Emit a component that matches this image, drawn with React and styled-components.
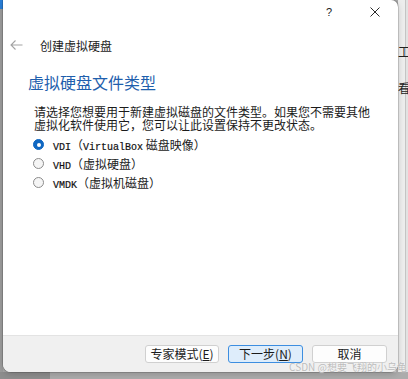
import React from "react";
import styled, { createGlobalStyle } from "styled-components";

const GlobalStyle = createGlobalStyle`
  html, body { margin: 0; padding: 0; }
  body {
    width: 408px; height: 379px; overflow: hidden;
    font-family: "Noto Sans CJK SC", "Noto Sans", sans-serif;
    color: #1b1b1b;
  }
`;

const Desktop = styled.div`
  position: relative;
  width: 408px;
  height: 379px;
  overflow: hidden;
  display: grid;
  grid-template-columns: 3px 395px 10px;
  grid-template-rows: 372px 7px;
  background: #a9a9a9;
`;

const LeftStrip = styled.div`
  background: linear-gradient(#2a7fd8 0 9px, #9d9d9d 9px);
`;

const RightStrip = styled.div`
  background: linear-gradient(to right, #ededed 0 7px, #c4c4c4 7px 8px, #e2e2e2 8px);
  overflow: hidden;
  white-space: nowrap;
  font-size: 12px;
  line-height: 14px;
  color: #222;
  padding-top: 45px;
  display: flex;
  flex-direction: column;
  gap: 22px;
`;

const BottomStrip = styled.div`
  grid-column: 1 / -1;
  background: linear-gradient(to right, #8e8e8e 0 50px, #acacac 50px);
`;

const Dialog = styled.div`
  position: relative;
  z-index: 1;
  background: #ffffff;
  border-radius: 0 7px 8px 8px;
  box-shadow: 0 0 0 1px rgba(0, 0, 0, 0.14), 0 2px 6px rgba(0, 0, 0, 0.18);
  display: flex;
  flex-direction: column;
  overflow: hidden;
`;

const TitleBar = styled.div`
  height: 24px;
  display: flex;
  justify-content: flex-end;
`;

const CaptionButton = styled.div`
  width: 46px;
  display: flex;
  align-items: center;
  justify-content: center;
  font-family: "Liberation Sans", sans-serif;
  font-size: 11px;
  color: #222;
`;

const Header = styled.div`
  height: 42px;
  display: flex;
  align-items: center;
  padding-left: 7px;
  gap: 17px;
  font-size: 12px;
  color: #222;
`;

const Content = styled.div`
  padding-left: 25px;
  display: flex;
  flex-direction: column;
`;

const Heading = styled.div`
  margin-top: 6px;
  font-size: 16px;
  line-height: 20px;
  color: #1f5fad;
`;

const Description = styled.p`
  margin: 13px 0 0 6px;
  font-size: 12px;
  line-height: 13px;
  color: #1b1b1b;
`;

const RadioList = styled.div`
  margin-top: 4px;
  display: flex;
  flex-direction: column;
`;

const RadioRow = styled.div`
  height: 19px;
  display: flex;
  align-items: center;
  gap: 9px;
  padding-left: 5px;
  font-size: 12px;
  color: #1b1b1b;
`;

const RadioDot = styled.span`
  width: 11px;
  height: 11px;
  box-sizing: border-box;
  border-radius: 50%;
  flex: none;
  display: flex;
  align-items: center;
  justify-content: center;
  background: ${(p) => (p.$checked ? "#0f67c2" : "#f5f5f5")};
  border: 1px solid ${(p) => (p.$checked ? "#0f67c2" : "#8c8c8c")};
  &::after {
    content: "";
    width: 4px;
    height: 4px;
    border-radius: 50%;
    background: #fff;
    display: ${(p) => (p.$checked ? "block" : "none")};
  }
`;

const Latin = styled.span`
  font-family: "Liberation Mono", monospace;
  font-size: 10px;
  color: #111;
  -webkit-text-stroke: 0.2px #111;
`;

const Footer = styled.div`
  margin-top: auto;
  height: 35px;
  border-top: 1px solid #e3e3e3;
  background: #f0f0f0;
  display: flex;
  align-items: center;
  justify-content: flex-end;
  gap: 9px;
  padding-right: 11px;
  padding-bottom: 1px;
`;

const Button = styled.div`
  width: ${(p) => p.$w || 75}px;
  height: 18px;
  box-sizing: border-box;
  border-radius: 3px;
  border: 1px solid ${(p) => (p.$primary ? "#3d8ee0" : "#d0d0d0")};
  background: ${(p) => (p.$primary ? "#deedfb" : "#fdfdfd")};
  display: flex;
  align-items: center;
  justify-content: center;
  font-size: 12px;
  color: #1b1b1b;
`;

const Key = styled.span`
  text-decoration: underline;
  text-underline-offset: 1px;
`;

const Watermark = styled.div`
  position: absolute;
  right: 1px;
  bottom: 7px;
  z-index: 2;
  font-size: 10px;
  line-height: 10px;
  color: #bcbcbc;
  text-shadow: 0 0 1px rgba(255, 255, 255, 0.9);
  white-space: nowrap;
`;

const ArrowIcon = () => (
  <svg width="13" height="10" viewBox="0 0 13 10" fill="none">
    <path d="M12.5 5H1M5.5 0.5L1 5l4.5 4.5" stroke="#a3a3a3" strokeWidth="1.1" />
  </svg>
);

const CloseIcon = () => (
  <svg width="10" height="10" viewBox="0 0 10 10">
    <path d="M0.5 0.5l9 9M9.5 0.5l-9 9" stroke="#2a2a2a" strokeWidth="1" />
  </svg>
);

export default function App() {
  return (
    <>
      <GlobalStyle />
      <Desktop>
        <LeftStrip />
        <Dialog>
          <TitleBar>
            <CaptionButton>?</CaptionButton>
            <CaptionButton>
              <CloseIcon />
            </CaptionButton>
          </TitleBar>
          <Header>
            <ArrowIcon />
            <span>创建虚拟硬盘</span>
          </Header>
          <Content>
            <Heading>虚拟硬盘文件类型</Heading>
            <Description>
              请选择您想要用于新建虚拟磁盘的文件类型。如果您不需要其他
              <br />
              虚拟化软件使用它，您可以让此设置保持不更改状态。
            </Description>
            <RadioList>
              <RadioRow>
                <RadioDot $checked />
                <span>
                  <Latin>VDI</Latin>（<Latin>VirtualBox</Latin> 磁盘映像）
                </span>
              </RadioRow>
              <RadioRow>
                <RadioDot />
                <span>
                  <Latin>VHD</Latin>（虚拟硬盘）
                </span>
              </RadioRow>
              <RadioRow>
                <RadioDot />
                <span>
                  <Latin>VMDK</Latin>（虚拟机磁盘）
                </span>
              </RadioRow>
            </RadioList>
          </Content>
          <Footer>
            <Button $w={74}>
              专家模式(<Key>E</Key>)
            </Button>
            <Button $primary>
              下一步(<Key>N</Key>)
            </Button>
            <Button>取消</Button>
          </Footer>
        </Dialog>
        <RightStrip>
          <span>工具</span>
          <span>看</span>
        </RightStrip>
        <BottomStrip />
        <Watermark>CSDN @想要飞翔的小乌龟</Watermark>
      </Desktop>
    </>
  );
}
